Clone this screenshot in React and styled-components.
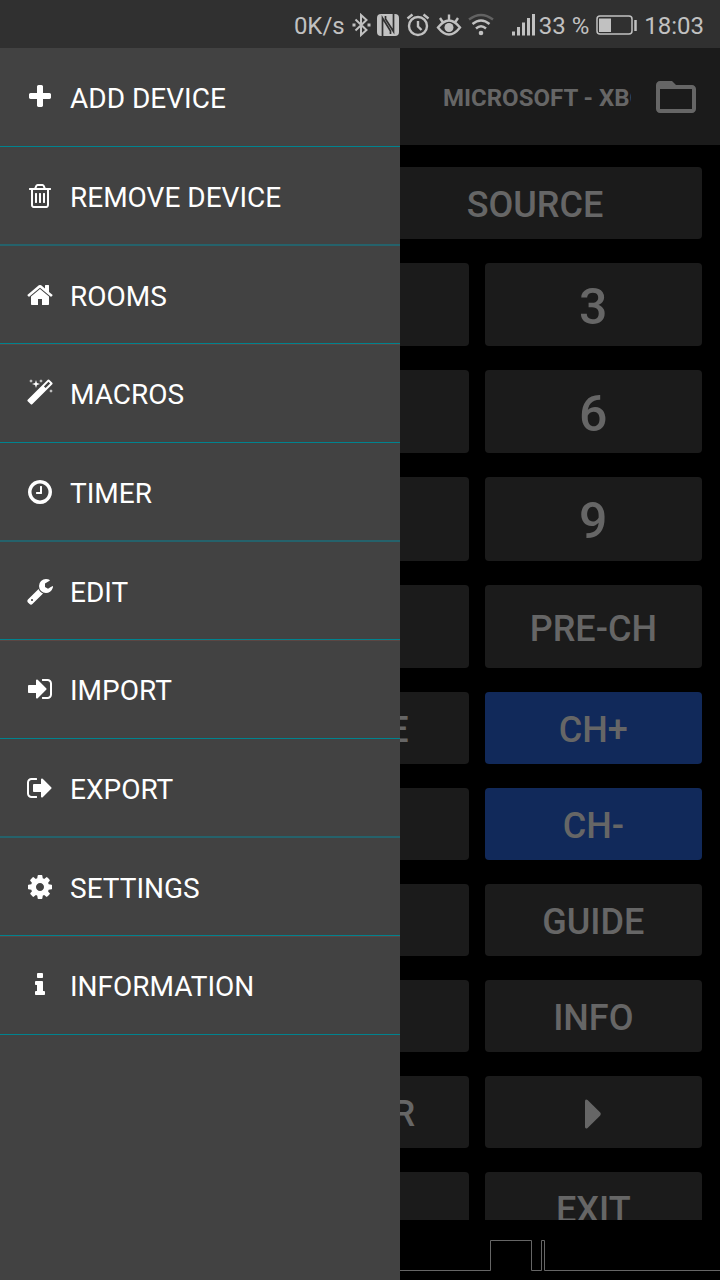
import React from "react";
import styled, { createGlobalStyle } from "styled-components";
import { MdFolderOpen } from "react-icons/md";

const GlobalStyle = createGlobalStyle`
  *, *::before, *::after { box-sizing: border-box; }
  body { margin: 0; background: #000; font-family: Roboto, "Liberation Sans", sans-serif; }
  button { font: inherit; border: 0; cursor: pointer; }
`;

const Screen = styled.div`
  position: relative;
  display: flex;
  flex-direction: column;
  height: 100vh;
  overflow: hidden;
  background: #000;
`;

const StatusBar = styled.header`
  flex: none;
  display: flex;
  align-items: center;
  justify-content: flex-end;
  height: 48px;
  padding: 2px 16px 0 0;
  background: #303030;
  color: #c1c1c1;
  font-size: 24px;
  line-height: 30px;
  white-space: nowrap;
`;

const StatusIcon = styled.svg`
  flex: none;
  display: block;
  width: ${(p) => p.$w}px;
  height: 24px;
  margin-left: ${(p) => p.$gap}px;
  fill: none;
  stroke: currentColor;
  stroke-width: 2.4;
`;

const StatusText = styled.span`
  margin-left: ${(p) => p.$gap || 0}px;
  padding-top: 2px;
`;

const Body = styled.div`
  position: relative;
  flex: 1;
  min-height: 0;
  display: flex;
  flex-direction: column;
`;

const Toolbar = styled.div`
  flex: none;
  display: flex;
  align-items: center;
  justify-content: flex-end;
  height: 97px;
  padding-right: 20px;
  background: #1b1b1b;
  color: #666;
`;

const DeviceName = styled.h1`
  width: 188px;
  margin: 0 21px 0 0;
  padding-top: 2px;
  overflow: hidden;
  white-space: nowrap;
  font-size: 24px;
  line-height: 32px;
  font-weight: 700;
`;

const FolderButton = styled.button`
  display: flex;
  padding: 0;
  background: none;
  color: inherit;
`;

const Keys = styled.main`
  flex: 1;
  min-height: 0;
  overflow: hidden;
  display: flex;
  flex-direction: column;
  gap: 24px;
  padding: 22px 18px 0;
`;

const KeyRow = styled.div`
  flex: none;
  display: grid;
  grid-template-columns: repeat(${(p) => p.$columns}, 1fr);
  grid-auto-rows: ${(p) => p.$height}px;
  gap: 16px;
`;

const Key = styled.button`
  display: flex;
  align-items: center;
  justify-content: center;
  padding: 4px 0 0;
  border-radius: 4px;
  background: ${(p) => (p.$blue ? "#11295a" : "#1b1b1b")};
  color: #666;
  font-size: ${(p) => (p.$digit ? 50 : 36)}px;
  font-weight: 500;
  line-height: 1;
`;

const Signal = styled.svg`
  flex: none;
  display: block;
  align-self: flex-end;
  width: 320px;
  height: 60px;
  fill: none;
  stroke: #666;
`;

const Drawer = styled.nav`
  position: absolute;
  inset: 0 auto 0 0;
  width: 400px;
  max-width: 80%;
  background: #424242;
`;

const Menu = styled.ul`
  margin: 0;
  padding: 0;
  list-style: none;
`;

const MenuRow = styled.li`
  height: 99px;
  border-bottom: 1px solid #00838f;
  &:nth-child(3n) { height: 98px; box-shadow: 0 1px #5a4643; }
  &:nth-child(3n + 2) { border-bottom: 2px solid #25626b; }
`;

const MenuButton = styled.button`
  display: flex;
  align-items: center;
  gap: 16px;
  width: 100%;
  height: 100%;
  padding: 0 26px;
  background: none;
  color: #fff;
  font-size: 28px;
  line-height: 32px;
  text-align: left;
`;

const MenuLabel = styled.span`
  padding-top: 4px;
`;

const MenuIcon = styled.svg`
  flex: none;
  width: 28px;
  height: 28px;
  fill: currentColor;
`;

const menu = [
  ["ADD DEVICE", "M1600 736v192q0 40-28 68t-68 28h-416v416q0 40-28 68t-68 28h-192q-40 0-68-28t-28-68v-416h-416q-40 0-68-28t-28-68v-192q0-40 28-68t68-28h416v-416q0-40 28-68t68-28h192q40 0 68 28t28 68v416h416q40 0 68 28t28 68z"],
  ["REMOVE DEVICE", "M704 736v576q0 14-9 23t-23 9h-64q-14 0-23-9t-9-23v-576q0-14 9-23t23-9h64q14 0 23 9t9 23zm256 0v576q0 14-9 23t-23 9h-64q-14 0-23-9t-9-23v-576q0-14 9-23t23-9h64q14 0 23 9t9 23zm256 0v576q0 14-9 23t-23 9h-64q-14 0-23-9t-9-23v-576q0-14 9-23t23-9h64q14 0 23 9t9 23zm128 724v-948h-896v948q0 22 7 40.5t14.5 27 10.5 8.5h832q3 0 10.5-8.5t14.5-27 7-40.5zm-672-1076h448l-48-117q-7-9-17-11h-317q-10 2-17 11zm928 32v64q0 14-9 23t-23 9h-96v948q0 83-47 143.5t-113 60.5h-832q-66 0-113-58.5t-47-141.5v-952h-96q-14 0-23-9t-9-23v-64q0-14 9-23t23-9h309l70-167q15-37 54-63t79-26h320q40 0 79 26t54 63l70 167h309q14 0 23 9t9 23z"],
  ["ROOMS", "M1472 992v480q0 26-19 45t-45 19h-384v-384h-256v384h-384q-26 0-45-19t-19-45v-480q0-1 .5-3t.5-3l575-474 575 474q1 2 1 6zm223-69l-62 74q-8 9-21 11h-3q-13 0-21-7l-692-577-692 577q-12 8-24 7-13-2-21-11l-62-74q-8-10-7-23.5t11-21.5l719-599q32-26 76-26t76 26l244 204v-195q0-14 9-23t23-9h192q14 0 23 9t9 23v408l219 182q10 8 11 21.5t-7 23.5z"],
  ["MACROS", "M1254 581l293-293-107-107-293 293zm447-293q0 27-18 45l-1286 1286q-18 18-45 18t-45-18l-198-198q-18-18-18-45t18-45l1286-1286q18-18 45-18t45 18l198 198q18 18 18 45zm-1351-190l98 30-98 30-30 98-30-98-98-30 98-30 30-98zm350 162l196 60-196 60-60 196-60-196-196-60 196-60 60-196zm930 478l98 30-98 30-30 98-30-98-98-30 98-30 30-98zm-640-640l98 30-98 30-30 98-30-98-98-30 98-30 30-98z"],
  ["TIMER", "M1024 544v448q0 14-9 23t-23 9h-320q-14 0-23-9t-9-23v-64q0-14 9-23t23-9h224v-352q0-14 9-23t23-9h64q14 0 23 9t9 23zm416 352q0-148-73-273t-198-198-273-73-273 73-198 198-73 273 73 273 198 198 273 73 273-73 198-198 73-273zm224 0q0 209-103 385.5t-279.5 279.5-385.5 103-385.5-103-279.5-279.5-103-385.5 103-385.5 279.5-279.5 385.5-103 385.5 103 279.5 279.5 103 385.5z"],
  ["EDIT", "M448 1472q0-26-19-45t-45-19-45 19-19 45 19 45 45 19 45-19 19-45zm644-420l-682 682q-37 37-90 37-52 0-91-37l-106-108q-38-36-38-90 0-53 38-91l681-681q39 98 114.5 173.5t173.5 114.5zm634-435q0 39-23 106-47 134-164.5 217.5t-258.5 83.5q-185 0-316.5-131.5t-131.5-316.5 131.5-316.5 316.5-131.5q58 0 121.5 16.5t107.5 46.5q16 11 16 28t-16 28l-293 169v224l193 107q5-3 79-48.5t135.5-81 70.5-35.5q15 0 23.5 10t8.5 25z"],
  ["IMPORT", "M1312 896q0 26-19 45l-544 544q-19 19-45 19t-45-19-19-45v-288h-448q-26 0-45-19t-19-45v-384q0-26 19-45t45-19h448v-288q0-26 19-45t45-19 45 19l544 544q19 19 19 45zm352-352v704q0 119-84.5 203.5t-203.5 84.5h-320q-13 0-22.5-9.5t-9.5-22.5q0-4-1-20t-.5-26.5 3-23.5 10-19.5 20.5-6.5h320q66 0 113-47t47-113v-704q0-66-47-113t-113-47h-312l-11.5-1-11.5-3-8-5.5-7-9-2-13.5q0-4-1-20t-.5-26.5 3-23.5 10-19.5 20.5-6.5h320q119 0 203.5 84.5t84.5 203.5z"],
  ["EXPORT", "M704 1440q0 4 1 20t.5 26.5-3 23.5-10 19.5-20.5 6.5h-320q-119 0-203.5-84.5t-84.5-203.5v-704q0-119 84.5-203.5t203.5-84.5h320q13 0 22.5 9.5t9.5 22.5q0 4 1 20t.5 26.5-3 23.5-10 19.5-20.5 6.5h-320q-66 0-113 47t-47 113v704q0 66 47 113t113 47h312l11.5 1 11.5 3 8 5.5 7 9 2 13.5zm928-544q0 26-19 45l-544 544q-19 19-45 19t-45-19-19-45v-288h-448q-26 0-45-19t-19-45v-384q0-26 19-45t45-19h448v-288q0-26 19-45t45-19 45 19l544 544q19 19 19 45z"],
  ["SETTINGS", "M1152 896q0-106-75-181t-181-75-181 75-75 181 75 181 181 75 181-75 75-181zm512-109v222q0 12-8 23t-20 13l-185 28q-19 54-39 91 35 50 107 138 10 12 10 25t-9 23q-27 37-99 108t-94 71q-12 0-26-9l-138-108q-44 23-91 38-16 136-29 186-7 28-36 28h-222q-14 0-24.5-8.5t-11.5-21.5l-28-184q-49-16-90-37l-141 107q-10 9-25 9-14 0-25-11-126-114-165-168-7-10-7-23 0-12 8-23 15-21 51-66.5t54-70.5q-27-50-41-99l-183-27q-13-2-21-12.5t-8-23.5v-222q0-12 8-23t19-13l186-28q14-46 39-92-40-57-107-138-10-12-10-24 0-10 9-23 26-36 98.5-107.5t94.5-71.5q13 0 26 10l138 107q44-23 91-38 16-136 29-186 7-28 36-28h222q14 0 24.5 8.5t11.5 21.5l28 184q49 16 90 37l142-107q9-9 24-9 13 0 25 10 129 119 165 170 7 8 7 22 0 12-8 23-15 21-51 66.5t-54 70.5q26 50 41 98l183 28q13 2 21 12.5t8 23.5z"],
  ["INFORMATION", "M1216 1344v128q0 26-19 45t-45 19h-512q-26 0-45-19t-19-45v-128q0-26 19-45t45-19h64v-384h-64q-26 0-45-19t-19-45v-128q0-26 19-45t45-19h384q26 0 45 19t19 45v576h64q26 0 45 19t19 45zm-128-1152v192q0 26-19 45t-45 19h-256q-26 0-45-19t-19-45v-192q0-26 19-45t45-19h256q26 0 45 19t19 45z"],
];

const PlayIcon = () => (
  <svg width="18" height="30" viewBox="0 0 18 30" fill="currentColor" aria-label="Play">
    <path d="M1 2.500Q1-.5 3.600 1L16 13.300Q17.500 15 16 16.700L3.600 29Q1 30.500 1 27.500z" />
  </svg>
);

const rows = [
  { height: 72, keys: [{}, { label: "SOURCE" }] },
  { height: 83, keys: [{}, {}, { label: "3", digit: true }] },
  { height: 83, keys: [{}, {}, { label: "6", digit: true }] },
  { height: 84, keys: [{}, {}, { label: "9", digit: true }] },
  { height: 83, keys: [{}, {}, { label: "PRE-CH" }] },
  { height: 72, keys: [{}, { label: "MUTE" }, { label: "CH+", blue: true }] },
  { height: 72, keys: [{}, { label: "LIST" }, { label: "CH-", blue: true }] },
  { height: 72, keys: [{}, {}, { label: "GUIDE" }] },
  { height: 72, keys: [{}, {}, { label: "INFO" }] },
  { height: 72, keys: [{}, { label: "ENTER" }, { label: <PlayIcon /> }] },
  { height: 72, keys: [{}, {}, { label: "EXIT" }] },
];

export default function App() {
  return (
    <Screen>
      <GlobalStyle />
      <StatusBar>
        <StatusText>0K/s</StatusText>
        <StatusIcon $w={20} $gap={6} viewBox="0 0 20 24">
          <path d="M4.500 6.500l11 10.500-5.500 5V2l5.500 5-11 10.500" strokeWidth="2" />
          <path d="M1.500 12h3M16.500 12h3" strokeWidth="3" />
        </StatusIcon>
        <StatusIcon $w={24} $gap={5} viewBox="0 0 24 24">
          <rect x="1" y="1" width="22" height="22" rx="4" fill="currentColor" stroke="none" />
          <path d="M6.500 23V5l8 13v3M17.500 1v17.500L9.500 6V3" stroke="#303030" strokeWidth="1.700" />
        </StatusIcon>
        <StatusIcon $w={24} $gap={6} viewBox="0 0 24 24">
          <circle cx="12" cy="13" r="9" />
          <path d="M12 8v5.500l3.500 3.500M1.500 5.500l5-4M17.500 1.500l5 4" />
        </StatusIcon>
        <StatusIcon $w={26} $gap={6} viewBox="0 0 26 24">
          <path d="M2 14.500q11-14 22 0-11 14-22 0zM13 1.500v6M4 5l3 4.500M22 5l-3 4.500" />
          <circle cx="13" cy="14.500" r="4.500" fill="currentColor" stroke="none" />
        </StatusIcon>
        <StatusIcon $w={26} $gap={6} viewBox="0 0 26 24">
          <path d="M1 6.500q12-9 24 0" opacity=".35" />
          <path d="M4.500 11q8.500-7 17 0M8 15.500q5-4.500 10 0" />
          <circle cx="13" cy="20" r="2.300" fill="currentColor" stroke="none" />
        </StatusIcon>
        <StatusIcon $w={24} $gap={17} viewBox="0 0 24 24">
          <path d="M2.500 18.500v4M7.500 14V22.500M12.500 9.500v13M17.500 5V22.500M22.500 1V22.500" strokeWidth="3" />
        </StatusIcon>
        <StatusText $gap={4}>33 %</StatusText>
        <StatusIcon $w={41} $gap={7} viewBox="0 0 41 24">
          <rect x="1" y="3" width="35" height="18" rx="3" strokeWidth="1.500" />
          <rect x="3" y="5.500" width="12" height="13.500" fill="currentColor" stroke="none" />
          <path d="M39.500 7v11" strokeWidth="2.500" />
        </StatusIcon>
        <StatusText $gap={7}>18:03</StatusText>
      </StatusBar>
      <Body>
        <Toolbar>
          <DeviceName>MICROSOFT - XBOX</DeviceName>
          <FolderButton aria-label="Open folder">
            <MdFolderOpen size={48} />
          </FolderButton>
        </Toolbar>
        <Keys>
          {rows.map((row, i) => (
            <KeyRow key={i} $columns={row.keys.length} $height={row.height}>
              {row.keys.map((k, j) => (
                <Key key={j} $blue={k.blue} $digit={k.digit}>
                  {k.label}
                </Key>
              ))}
            </KeyRow>
          ))}
        </Keys>
        <Signal viewBox="0 0 320 60">
          <path d="M0 50.500H90.500V20.500H131.500V50.500H141.500V20.500H144.500V50.500H320" />
        </Signal>
        <Drawer>
          <Menu>
            {menu.map(([label, d]) => (
              <MenuRow key={label}>
                <MenuButton>
                  <MenuIcon viewBox="0 0 1792 1792" aria-hidden="true">
                    <path d={d} />
                  </MenuIcon>
                  <MenuLabel>{label}</MenuLabel>
                </MenuButton>
              </MenuRow>
            ))}
          </Menu>
        </Drawer>
      </Body>
    </Screen>
  );
}
